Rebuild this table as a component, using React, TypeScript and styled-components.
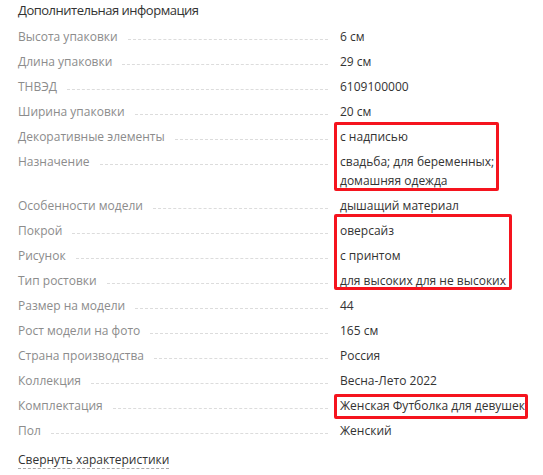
import { createGlobalStyle, styled } from 'styled-components';

const GlobalStyle = createGlobalStyle`
  body {
    margin: 0;
    background: #fff;
    font-family: "Open Sans", "Noto Sans", sans-serif;
  }
`;

type Spec = { label: string; value: string[] };

const specs: Spec[] = [
  { label: 'Высота упаковки', value: ['6 см'] },
  { label: 'Длина упаковки', value: ['29 см'] },
  { label: 'ТНВЭД', value: ['6109100000'] },
  { label: 'Ширина упаковки', value: ['20 см'] },
  { label: 'Декоративные элементы', value: ['с надписью'] },
  { label: 'Назначение', value: ['свадьба; для беременных;', 'домашняя одежда'] },
  { label: 'Особенности модели', value: ['дышащий материал'] },
  { label: 'Покрой', value: ['оверсайз'] },
  { label: 'Рисунок', value: ['с принтом'] },
  { label: 'Тип ростовки', value: ['для высоких для не высоких'] },
  { label: 'Размер на модели', value: ['44'] },
  { label: 'Рост модели на фото', value: ['165 см'] },
  { label: 'Страна производства', value: ['Россия'] },
  { label: 'Коллекция', value: ['Весна-Лето 2022'] },
  { label: 'Комплектация', value: ['Женская Футболка для девушек'] },
  { label: 'Пол', value: ['Женский'] },
];

const marks = [
  { top: 122, left: 334, width: 165, height: 69 },
  { top: 214, left: 334, width: 178, height: 76 },
  { top: 394, left: 334, width: 194, height: 25 },
];

function App() {
  return (
    <Page>
      <GlobalStyle />
      <Title>Дополнительная информация</Title>
      <List>
        {specs.map((s) => (
          <Row key={s.label}>
            <LabelCell>
              <Label>{s.label}</Label>
              <Dots />
            </LabelCell>
            <Value>
              {s.value.map((line) => (
                <div key={line}>{line}</div>
              ))}
            </Value>
          </Row>
        ))}
      </List>
      <Toggle>Свернуть характеристики</Toggle>
      {marks.map((m, i) => (
        <Mark key={i} $top={m.top} $left={m.left} $width={m.width} $height={m.height} />
      ))}
    </Page>
  );
}

const Page = styled.div`
  position: relative;
  width: 543px;
  height: 475px;
  padding: 1px 0 0 18px;
  box-sizing: border-box;
  overflow: hidden;
`;

const Title = styled.div`
  font-size: 13px;
  line-height: 19px;
  letter-spacing: -0.5px;
  color: #333;
  margin-bottom: 7px;
`;

const List = styled.div`
  display: flex;
  flex-direction: column;
  gap: 6px;
`;

const Row = styled.div`
  display: grid;
  grid-template-columns: 322px 1fr;
  font-size: 12px;
  line-height: 19px;
`;

const LabelCell = styled.div`
  display: flex;
  align-items: flex-start;
  height: 19px;
`;

const Label = styled.span`
  color: #8c8c8c;
  white-space: nowrap;
`;

const Dots = styled.span`
  flex: 1;
  margin: 0 12px 0 10px;
  height: 12px;
  border-bottom: 1px dashed #dcdcdc;
`;

const Value = styled.div`
  color: #333;
  white-space: nowrap;
`;

const Toggle = styled.span`
  display: inline-block;
  margin-top: 11px;
  font-size: 12px;
  line-height: 17px;
  color: #333;
  border-bottom: 1px dashed #aaa;
`;

const Mark = styled.div<{ $top: number; $left: number; $width: number; $height: number }>`
  position: absolute;
  top: ${(p) => p.$top}px;
  left: ${(p) => p.$left}px;
  width: ${(p) => p.$width}px;
  height: ${(p) => p.$height}px;
  border: 3px solid #f5141e;
  border-radius: 2px;
  box-sizing: border-box;
  pointer-events: none;
`;

export default App;
